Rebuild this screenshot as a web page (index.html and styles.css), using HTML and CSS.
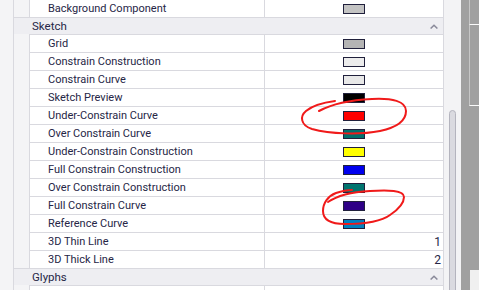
FILE: index.html
```html
<!DOCTYPE html>
<html lang="en">
<head>
    <meta charset="UTF-8">
    <meta name="viewport" content="width=device-width, initial-scale=1.0">
    <title>Property Grid - Colors</title>
    <link rel="stylesheet" href="styles.css">
</head>
<body>
    <div class="screen">
        <div class="grid">
            <div class="list">
                <div class="group">
                    <div class="item"><div class="name">Background Component</div><div class="value"><span class="swatch" style="background:#c3c3c3"></span></div></div>
                </div>

                <div class="group">
                    <div class="group-head">
                        <span>Sketch</span>
                        <svg class="chev" width="8" height="5" viewBox="0 0 8 5"><polyline points="0.6,4.5 4,1.2 7.4,4.5"/></svg>
                    </div>
                    <div class="item"><div class="name">Grid</div><div class="value"><span class="swatch" style="background:#b4b4b4"></span></div></div>
                    <div class="item"><div class="name">Constrain Construction</div><div class="value"><span class="swatch" style="background:#ececec"></span></div></div>
                    <div class="item"><div class="name">Constrain Curve</div><div class="value"><span class="swatch" style="background:#e8e8e8"></span></div></div>
                    <div class="item"><div class="name">Sketch Preview</div><div class="value"><span class="swatch" style="background:#000000"></span></div></div>
                    <div class="item"><div class="name">Under-Constrain Curve</div><div class="value"><span class="swatch" style="background:#ff0000"></span></div></div>
                    <div class="item"><div class="name">Over Constrain Curve</div><div class="value"><span class="swatch" style="background:#006f6c"></span></div></div>
                    <div class="item"><div class="name">Under-Constrain Construction</div><div class="value"><span class="swatch" style="background:#ffff00"></span></div></div>
                    <div class="item"><div class="name">Full Constrain Construction</div><div class="value"><span class="swatch" style="background:#0000ee"></span></div></div>
                    <div class="item"><div class="name">Over Constrain Construction</div><div class="value"><span class="swatch" style="background:#00746f"></span></div></div>
                    <div class="item"><div class="name">Full Constrain Curve</div><div class="value"><span class="swatch" style="background:#2e0086"></span></div></div>
                    <div class="item"><div class="name">Reference Curve</div><div class="value"><span class="swatch" style="background:#0080c0"></span></div></div>
                    <div class="item"><div class="name">3D Thin Line</div><div class="value num">1</div></div>
                    <div class="item"><div class="name">3D Thick Line</div><div class="value num">2</div></div>
                </div>

                <div class="group">
                    <div class="group-head">
                        <span>Glyphs</span>
                        <svg class="chev" width="8" height="5" viewBox="0 0 8 5"><polyline points="0.6,4.5 4,1.2 7.4,4.5"/></svg>
                    </div>
                    <div class="item"><div class="name">Panel Shading</div><div class="value"><span class="swatch" style="background:#e8d8c8"></span></div></div>
                </div>
            </div>
            <div class="scrollbar"><div class="thumb"></div></div>
        </div>
        <div class="side">
            <div class="side-top"></div>
            <div class="side-panel"></div>
            <div class="side-gap"></div>
            <div class="side-bottom"></div>
        </div>

        <!-- hand drawn marks on top of the screenshot -->
        <svg class="marks" width="479" height="290" viewBox="0 0 479 290">
            <path d="M319,111 C332,104 350,100 372,99 C392,98 406,101 406,111 C406,122 394,128 380,131 C360,135 330,134 312,129 C300,125 300,116 306,111 C312,106 320,103 335,101"/>
            <path d="M328,202 C338,195 352,192 370,191 C388,190 404,190 404,197 C404,205 396,211 390,215 C382,221 365,224 345,224 C330,224 323,219 323,211 C323,203 328,196 336,193 C342,191 348,190 352,190"/>
        </svg>
    </div>
</body>
</html>
```

FILE: styles.css
```css
body {
    margin: 0;
    font-family: Roboto, "Liberation Sans", sans-serif;
    font-size: 11px;
    color: #262646;
    background: #f4f4f6;
    overflow: hidden;
}
.screen {
    position: relative;
    display: flex;
    width: 479px;
    height: 290px;
    overflow: hidden;
}
.grid {
    display: flex;
    width: 461px;
}
.list {
    width: 429px;
    margin-left: 13px;
    margin-top: -1px;
    border-left: 1px solid #d9d9df;
    border-right: 1px solid #d9d9df;
}
.group-head {
    display: flex;
    align-items: center;
    justify-content: space-between;
    height: 16px;
    padding: 0 5px 0 18px;
    border-top: 1px solid #d9d9df;
    background: #eeeef2;
    font-size: 11.5px;
}
.chev polyline {
    fill: none;
    stroke: #8a8a9a;
    stroke-width: 1.5;
}
.item {
    display: flex;
    padding-left: 15px;
}
.name {
    width: 216px;
    height: 17px;
    line-height: 18px;
    padding-left: 18px;
    border-left: 1px solid #d9d9df;
    border-top: 1px solid #d9d9df;
    background: #fff;
    white-space: nowrap;
}
.value {
    flex: 1;
    display: flex;
    align-items: center;
    justify-content: center;
    height: 17px;
    border-left: 1px solid #d9d9df;
    border-top: 1px solid #d9d9df;
    background: #fff;
}
.value.num {
    justify-content: flex-end;
    padding-right: 2px;
    font-size: 12px;
}
.swatch {
    box-sizing: border-box;
    width: 22px;
    height: 10px;
    border: 1px solid #20203c;
}
.scrollbar {
    width: 17px;
    padding: 110px 0 0 5px;
    box-sizing: border-box;
    background: #f3f3f5;
}
.thumb {
    box-sizing: border-box;
    width: 7px;
    height: 200px;
    border: 1px solid #b4b4be;
    border-radius: 4px 4px 0 0;
    background: #dadae0;
}
.side {
    width: 18px;
    padding-left: 8px;
    box-sizing: border-box;
    background: #a0a0a0;
}
.side-top {
    height: 24px;
    border-left: 1px solid #c6c6c6;
}
.side-panel {
    height: 80px;
    border-top: 1px solid #fafafa;
    border-bottom: 1px solid #fafafa;
    border-left: 1px solid #c6c6c6;
}
.side-gap {
    height: 164px;
}
.side-bottom {
    height: 20px;
    margin-left: 1px;
    background: #f0f0f0;
}
.marks {
    position: absolute;
    left: 0;
    top: 0;
    pointer-events: none;
}
.marks path {
    fill: none;
    stroke: #f01a1a;
    stroke-width: 2;
    stroke-linecap: round;
}
```
